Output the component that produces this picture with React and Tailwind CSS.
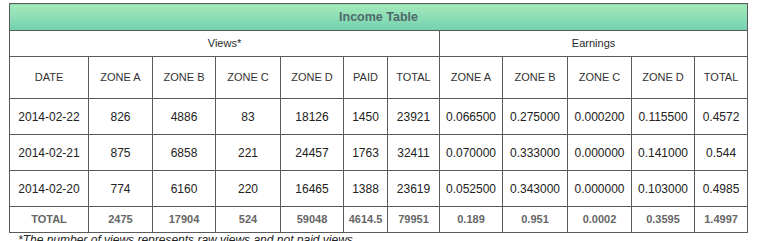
const views = [
  { date: '2014-02-22', a: '826', b: '4886', c: '83', d: '18126', paid: '1450', total: '23921', ea: '0.066500', eb: '0.275000', ec: '0.000200', ed: '0.115500', et: '0.4572' },
  { date: '2014-02-21', a: '875', b: '6858', c: '221', d: '24457', paid: '1763', total: '32411', ea: '0.070000', eb: '0.333000', ec: '0.000000', ed: '0.141000', et: '0.544' },
  { date: '2014-02-20', a: '774', b: '6160', c: '220', d: '16465', paid: '1388', total: '23619', ea: '0.052500', eb: '0.343000', ec: '0.000000', ed: '0.103000', et: '0.4985' },
]

const totals = ['TOTAL', '2475', '17904', '524', '59048', '4614.5', '79951', '0.189', '0.951', '0.0002', '0.3595', '1.4997']
const heads = ['DATE', 'ZONE A', 'ZONE B', 'ZONE C', 'ZONE D', 'PAID', 'TOTAL', 'ZONE A', 'ZONE B', 'ZONE C', 'ZONE D', 'TOTAL']
const widths = [79, 64, 63, 65, 63, 44, 52, 63, 65, 64, 63, 53]

function App() {
  return (
    <div className="min-h-screen bg-white pl-[9px] pt-[3px] font-['Liberation_Sans',Arial,sans-serif]">
      <table className="table-fixed border-collapse w-[739px] text-center">
        <colgroup>
          {widths.map((w, i) => (
            <col key={i} style={{ width: w }} />
          ))}
        </colgroup>
        <thead>
          {/* Title */}
          <tr className="h-[27px]">
            <th
              colSpan={12}
              className="border border-[#5a5a5a] bg-gradient-to-b from-[#a4e9ba] to-[#72d1b1] text-[12.5px] font-bold text-[#4f6a6a]"
            >
              Income Table
            </th>
          </tr>
          <tr className="h-[26px]">
            <th colSpan={7} className="border border-[#5a5a5a] text-[11px] font-normal text-[#2a2a2a]">
              Views*
            </th>
            <th colSpan={5} className="border border-[#5a5a5a] text-[11px] font-normal text-[#2a2a2a]">
              Earnings
            </th>
          </tr>
          <tr className="h-[42px]">
            {heads.map((h, i) => (
              <th key={i} className="border border-[#5a5a5a] text-[11px] font-normal text-[#333] whitespace-nowrap">
                {h}
              </th>
            ))}
          </tr>
        </thead>
        <tbody>
          {views.map((r) => (
            <tr key={r.date} className="h-[36px]">
              {[r.date, r.a, r.b, r.c, r.d, r.paid, r.total, r.ea, r.eb, r.ec, r.ed, r.et].map((v, i) => (
                <td key={i} className="border border-[#5a5a5a] text-[12px] text-[#222] whitespace-nowrap">
                  {v}
                </td>
              ))}
            </tr>
          ))}
          <tr className="h-[26px]">
            {totals.map((v, i) => (
              <td key={i} className="border border-[#5a5a5a] text-[11px] font-bold text-[#666] whitespace-nowrap">
                {v}
              </td>
            ))}
          </tr>
        </tbody>
      </table>
      <p className="pl-[9px] text-[12px] italic text-[#222] leading-[14px]">
        *The number of views represents raw views and not paid views
      </p>
    </div>
  )
}

export default App
